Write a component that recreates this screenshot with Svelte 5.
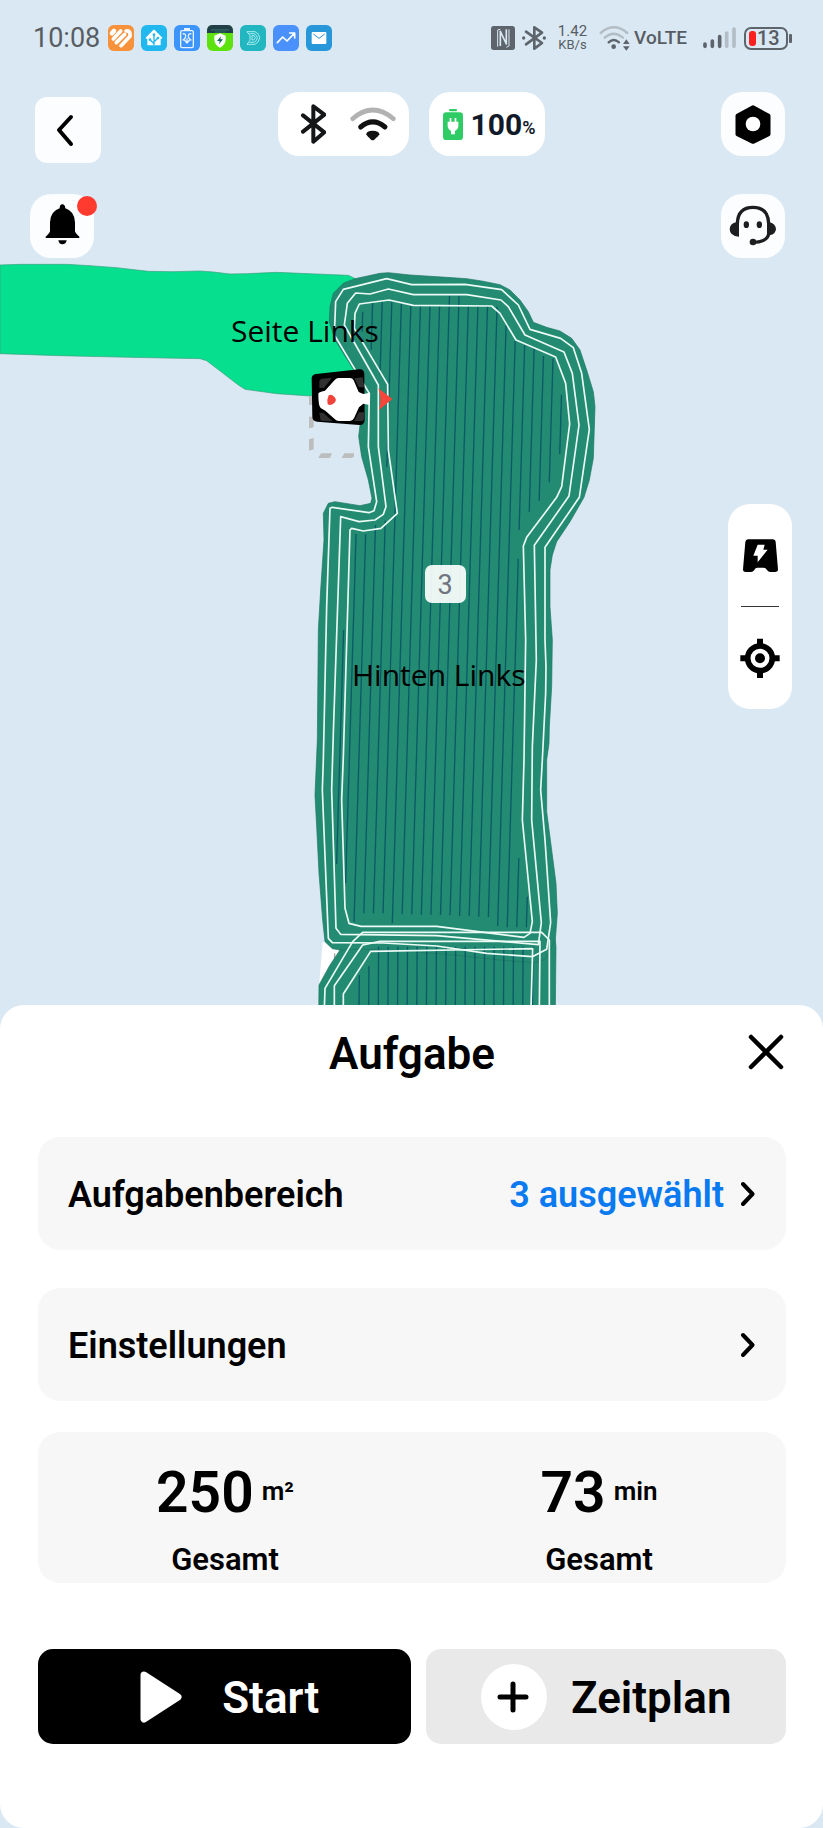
<script>
  const PITCH = 28.75;
  const LEAN = 0.03;

  // Mowing lanes of the upper zone: lane index, start and end along the lane.
  const lanes = [
    [-1, 1140, 1842],
    [0, 185, 245], [0, 852, 1900],
    [1, 156, 300], [1, 853, 2015],
    [2, 155, 372], [2, 826, 1990],
    [3, 155, 652], [3, 812, 1990],
    [4, 158, 1990], [5, 168, 2020],
    [6, 168, 1993], [7, 168, 1993], [8, 168, 1994],
    [9, 138, 1994], [10, 138, 1995], [11, 168, 1996],
    [12, 168, 1998], [13, 168, 1999], [14, 170, 2000],
    [15, 225, 2001], [16, 272, 2028],
    [17, 285, 840], [17, 926, 2032],
    [18, 290, 785], [18, 1825, 2032],
    [19, 318, 752], [19, 1940, 2032],
    [20, 326, 697], [21, 434, 612]
  ];
  const laneX = (k, y) => 189 + PITCH * k - LEAN * (y - 160);

  const lowerLanes = Array.from({ length: 19 }, (_, i) => ({
    x: 178 + i * 28.9,
    y: i === 0 ? 2175 : i === 1 ? 2148 : 2090
  }));

  const stats = [
    { value: '250', unit: 'm²', label: 'Gesamt' },
    { value: '73', unit: 'min', label: 'Gesamt' }
  ];
</script>

<div class="screen">
  <section class="stage">
    <svg class="map" viewBox="0 0 823 1005" preserveAspectRatio="xMidYMin slice" role="img" aria-label="Karte">
      <g transform="translate(0 250) scale(.33333)">
        <path d="M0 45L60 43L200 43L270 47L350 53L445 64L520 65L600 63L640 66L690 72L740 71L830 67L950 72L1045 76L1070 88L1100 380L1060 440L930 438L830 431L735 418L715 405L620 332L600 326L390 322L180 317L0 311Z" fill="#05df8e" stroke="#3f9f80" stroke-width="2" />
      </g>
      <g transform="translate(300 250) scale(.33333)" fill="none">
        <path d="M68 2075L52 2275H140V2090Z" fill="#fff" />
        <path d="M104 2110V2136" stroke="#a8aaa9" stroke-width="4" />
        <path fill="#238b72" stroke="#1c765f" stroke-width="2" d="M165 86L240 70L265 68L330 75L440 82L500 86L545 93L600 104L630 120L660 150L685 185L700 217L740 232L780 243L815 265L840 300L860 360L880 425L885 470L880 625L868 690L852 742L810 815L770 875L757 915L750 960L750 1070L757 1170L755 1310L748 1430L747 1480L740 1530L740 1685L755 1800L768 1900L772 1990L766 2070L768 2090L766 2275H56L57 2205L90 2145L120 2100L97 2096L75 2075L68 2010L57 1870L50 1730L45 1635L52 1470L55 1140L62 1020L72 870L70 790L85 760L105 755L180 767L212 760L216 745L205 690L185 620L176 560L180 525L185 370L160 358L105 270L88 215L90 170L100 130L130 100Z" />
        <path stroke="#1b765f" stroke-width="2" d="M120 2100L190 2097L410 2110L600 2130L700 2138L735 2128L766 2070" />
        <g stroke="#0a5a68" stroke-width="4">
          {#each lanes as [k, y1, y2]}
            <line x1={laneX(k, y1)} {y1} x2={laneX(k, y2)} {y2} />
          {/each}
          {#each lowerLanes as lane}
            <line x1={lane.x} y1={lane.y} x2={lane.x - 1} y2="2275" />
          {/each}
        </g>
        <g stroke="#ecfbf5" stroke-width="5" stroke-linejoin="round">
          <path d="M260 86L335 104L495 103L605 119L655 165L690 238L782 265L820 293L845 370L868 538L838 742L735 892L735 1170L738 1250L737 1330L727 1530L722 1620L735 1770L752 2018L740 2098L697 2120L560 2110L410 2088L250 2079L97 2078L85 2065L67 1620L70 1530L80 1070L90 775L97 772L207 788L222 782L230 755L205 590L208 430L103 255L107 155L130 118Z" />
          <path d="M265 117L340 134L500 134L603 150L625 170L675 255L792 306L817 370L837 525L807 738L703 886L709 1230L697 1490L695 1710L724 2018L715 2084L410 2057L122 2053L108 2035L95 1620L100 1450L122 800L177 815L225 810L250 793L258 770L235 590L235 405L133 225L142 160L167 129L210 132Z" />
          <path d="M267 150L340 166L575 168L600 190L648 270L767 321L797 400L809 522L785 710L770 742L680 862L670 888L677 1170L672 1530L667 1710L697 2015L690 2050L672 2062L410 2029L183 2029L147 2020L135 1975L125 1650L130 1520L150 840L155 835L190 843L243 835L292 790L265 600L263 403L163 235L165 190L178 162Z" />
          <path d="M73 2275L75 2215L158 2075L188 2047H725L748 2070V2275" />
          <path d="M103 2275V2207L188 2085L240 2074H720L718 2275" />
          <path d="M130 2275V2232L212 2104L698 2096L693 2275" />
        </g>
      </g>
      <g class="zone">
        <text x="231" y="342">Seite Links</text>
        <text x="352" y="686">Hinten Links</text>
      </g>
      <rect x="425" y="565" width="41" height="38" rx="7" fill="#fff" fill-opacity=".91" />
      <text class="count" x="445" y="594" text-anchor="middle">3</text>
      <g transform="translate(300 250) scale(.33333)">
        <path fill="#bcbdbd" d="M27 440L41 436V465H27ZM27 500H41V532L27 535ZM27 568L41 564V598L27 602ZM63 610H96L90 624H55ZM133 610H162V620L154 624H125Z" />
        <path d="M48 372L178 358Q192 357 193 372L194 510Q193 526 178 525L52 515Q37 513 37 500L35 385Q35 374 48 372Z" />
        <path fill="#303030" d="M64 386L96 383L72 414H58V392ZM163 385L188 382L193 412H176ZM58 488H70L98 514L62 512ZM176 487H193V508L188 513H163Z" />
        <path fill="#fff" d="M55 432Q54 426 75 422L104 390Q109 384 116 384H150Q157 384 161 391L176 426L190 432L209 428V465L190 461L177 472L162 505Q158 513 150 513H117Q109 513 104 507L76 482L62 474Q55 468 55 432Z" />
        <path fill="#f0443a" d="M86 436Q96 430 104 442Q112 450 102 460Q92 468 83 463Q80 448 86 436Z" />
        <path fill="#f8453a" d="M235 415L277 447L237 480Q247 447 235 415Z" />
      </g>
    </svg>

    <div class="status">
      <span class="time">10:08</span>
      <div class="apps">
        <svg viewBox="0 0 78 78">
          <rect width="78" height="78" rx="17" fill="#f8923a" />
          <g stroke="#fff" stroke-width="11" stroke-linecap="round" fill="none">
            <path d="M12 25L18 18" stroke-width="14" /><path d="M16 42L38 18" /><path d="M25 53L50 28" /><path d="M39 62L66 34V25Q64 16 54 18" />
          </g>
        </svg>
        <svg viewBox="0 0 78 78">
          <rect width="78" height="78" rx="17" fill="#20b8ee" />
          <path d="M39 16L62 39H57V59H21V39H16Z" fill="#fff" stroke="#fff" stroke-width="4" stroke-linejoin="round" />
          <path d="M39 30V61M39 56L27 44M39 51L50 40" stroke="#20b8ee" stroke-width="4" fill="none" />
          <g fill="#20b8ee"><circle cx="39" cy="29" r="4" /><circle cx="27" cy="44" r="4" /><circle cx="51" cy="39" r="4" /></g>
        </svg>
        <svg viewBox="0 0 78 78">
          <rect width="78" height="78" rx="17" fill="#3d94fa" />
          <g stroke="#e7f3ff" stroke-width="4" fill="none">
            <rect x="20" y="17" width="38" height="51" rx="4" /><path d="M30 12H48" stroke-width="6" /><path d="M26 27Q35 24 35 34Q34 42 26 46M52 27Q43 24 43 34Q44 42 52 46M31 45L39 54L47 45M39 40V52" />
          </g>
        </svg>
        <svg viewBox="0 0 78 78">
          <rect width="78" height="78" rx="17" fill="#5de20f" />
          <path d="M0 24V17Q0 0 17 0H61Q78 0 78 17V24Z" fill="#213f48" />
          <path d="M12 12H66V17H12ZM24 19H56V23H24Z" fill="#2e5d5b" />
          <path d="M39 25L56 32V45Q55 60 39 68Q23 60 22 45V32Z" fill="#fff" />
          <path d="M42 34L30 48H38L36 58L48 43H40Z" fill="#17655a" />
        </svg>
        <svg viewBox="0 0 78 78">
          <rect width="78" height="78" rx="17" fill="#21b6c0" />
          <path d="M21 20H45Q58 26 59 38Q58 52 45 58H21L30 46V32ZM28 26H42Q51 30 52 38Q51 48 42 52H29M36 32H42L46 38L41 45H36Z" fill="none" stroke="#a9edf0" stroke-width="3" stroke-linejoin="round" />
        </svg>
        <svg viewBox="0 0 78 78">
          <rect width="78" height="78" rx="17" fill="#4a91fb" />
          <path d="M13 53L29 36L42 48L63 26M50 24H65V39" fill="none" stroke="#fff" stroke-width="5" stroke-linejoin="round" stroke-linecap="round" />
        </svg>
        <svg viewBox="0 0 78 78">
          <rect width="78" height="78" rx="17" fill="#2897da" />
          <rect x="17" y="21" width="44" height="36" rx="3" fill="#fff" />
          <path d="M22 27L39 40L56 27" fill="none" stroke="#2590d0" stroke-width="3" />
        </svg>
      </div>
      <div class="signals">
        <svg width="24" height="24" viewBox="0 0 72 72">
          <rect width="72" height="72" rx="8" fill="#5d646b" />
          <path d="M28 60V16L46 54V10" fill="none" stroke="#dae8f3" stroke-width="5" stroke-linejoin="round" /><path d="M20 62V12L28 10M54 10V60L46 64" fill="none" stroke="#dae8f3" stroke-width="3" />
        </svg>
        <svg class="bt" width="24" height="26" viewBox="0 0 72 78">
          <path d="M12 20L60 54L37 71V7L60 23L12 58" fill="none" stroke="#5d646b" stroke-width="8" stroke-linejoin="round" stroke-linecap="round" />
          <g fill="#5d646b"><circle cx="5" cy="39" r="5" /><circle cx="67" cy="39" r="5" /></g>
        </svg>
        <span class="rate"><span>1.42</span><span class="kb">KB/s</span></span>
        <svg class="wifi" width="31" height="26" viewBox="0 0 93 78">
          <g fill="none" stroke-width="7" stroke-linecap="round">
            <path d="M5 24Q44 -10 85 24" stroke="#b3bdc5" /><path d="M17 38Q44 14 72 38" stroke="#b3bdc5" /><path d="M29 52Q44 38 60 52" stroke="#5d646b" />
          </g>
          <circle cx="44" cy="65" r="7" fill="#5d646b" />
          <path d="M82 43L92 57H72ZM82 77L92 64H72Z" fill="#5d646b" />
        </svg>
        <span class="volte">VoLTE</span>
        <svg class="bars" width="33" height="22" viewBox="0 0 99 66">
          <g stroke-width="11" stroke-linecap="round">
            <path d="M6 51V58M28 42V58M50 29V58" stroke="#5d646b" /><path d="M71 18V58M93 6V58" stroke="#b3bdc5" />
          </g>
        </svg>
        <span class="phone-battery">13</span>
      </div>
    </div>

    <header class="bar">
      <button class="back" aria-label="Zurück">
        <svg width="66" height="66" viewBox="0 0 66 66"><path d="M36 20L24 33L36 47" fill="none" stroke="#000" stroke-width="4" stroke-linecap="round" stroke-linejoin="round" /></svg>
      </button>
      <div class="pills">
        <div class="pill link">
          <svg width="26" height="40" viewBox="0 0 78 120">
            <path d="M9 34L73 85L40 113V7L73 32L9 83" fill="none" stroke="#151618" stroke-width="12" stroke-linejoin="round" stroke-linecap="round" />
          </svg>
          <svg width="46" height="34" viewBox="0 0 138 102">
            <path d="M8 35Q68 -17 130 35" fill="none" stroke="#b2b2b2" stroke-width="14" stroke-linecap="round" />
            <path d="M32 60Q68 29 105 60" fill="none" stroke="#111" stroke-width="15" stroke-linecap="round" />
            <path d="M49 82Q49 71 68 71Q87 71 88 82Q86 87 73 98Q68 101 63 98Q51 87 49 82Z" fill="#111" />
          </svg>
        </div>
        <div class="pill charge">
          <svg width="20" height="31" viewBox="0 0 60 93">
            <rect x="18" width="24" height="7" rx="3" fill="#2fcc65" /><rect y="10" width="60" height="83" rx="10" fill="#2fcc65" />
            <path d="M20 27H25V38H35V27H40V38H46V53Q45 61 36 66V76H24V66Q15 61 14 53V38H20Z" fill="#fff" />
          </svg>
          <span class="level">100</span><span class="percent">%</span>
        </div>
      </div>
      <button class="tile end" aria-label="Einstellungen öffnen">
        <svg width="64" height="64" viewBox="0 0 192 192"><path d="M96 45L143 71V127L96 150L49 127V71Z" stroke="#000" stroke-width="11" stroke-linejoin="round" /><circle cx="96" cy="96" r="22" fill="#fff" /></svg>
      </button>
    </header>

    <div class="second">
      <button class="tile" aria-label="Meldungen">
        <svg width="64" height="64" viewBox="0 0 192 192"><path d="M89 43Q89 31 97 31Q105 31 106 43Q134 52 135 85V112Q136 118 148 128V132H47V128Q59 118 60 112V85Q61 52 89 43Z" /><path d="M85 139H110Q108 151 97 151Q87 151 85 139Z" /></svg>
        <span class="alert"></span>
      </button>
      <button class="tile" aria-label="Hilfe">
        <svg width="64" height="64" viewBox="0 0 192 192">
          <path d="M49 125V88Q51 40 96 40Q141 40 143 88V120Q139 144 96 145" fill="none" stroke="#1c1e20" stroke-width="10" />
          <path d="M54 128Q26 126 26 105Q27 88 46 85H54ZM138 85H146Q164 90 165 105Q164 121 146 124H138Z" fill="#1c1e20" />
          <circle cx="96" cy="144" r="10" fill="#1c1e20" /><ellipse cx="76" cy="92" rx="8" ry="10" fill="#1c1e20" /><ellipse cx="115" cy="92" rx="8" ry="10" fill="#1c1e20" />
        </svg>
      </button>
    </div>

    <div class="tools">
      <button aria-label="Zur Station">
        <svg width="64" height="102" viewBox="0 0 192 306">
          <path d="M60 106H134Q142 106 143 114L150 196Q150 204 141 204H127Q121 204 117 198Q113 191 107 191H88Q82 191 79 198Q75 204 69 204H53Q45 204 45 196L52 114Q53 106 60 106Z" />
          <path d="M89 122H110L106 137H119L89 175V155H76Z" fill="#fff" />
        </svg>
      </button>
      <hr />
      <button aria-label="Zentrieren">
        <svg width="64" height="102" viewBox="0 0 192 306">
          <circle cx="96" cy="154" r="37" fill="none" stroke="#000" stroke-width="17" /><circle cx="96" cy="154" r="15" />
          <path d="M87 95H105V117H87ZM87 191H105V213H87ZM37 145H58V163H37ZM134 145H155V163H134Z" />
        </svg>
      </button>
    </div>
  </section>

  <section class="sheet">
    <div class="sheet-head">
      <h1>Aufgabe</h1>
      <button class="close" aria-label="Schließen">
        <svg width="36" height="36" viewBox="0 0 36 36"><path d="M3 3L33 33M33 3L3 33" stroke="#000" stroke-width="4.500" stroke-linecap="round" /></svg>
      </button>
    </div>

    <div class="rows">
      <button class="row">
        <span>Aufgabenbereich</span>
        <span class="chosen">3 ausgewählt</span>
        <svg width="14" height="26" viewBox="0 0 14 26"><path d="M2 3L11.500 13L2 23" fill="none" stroke="#000" stroke-width="4" stroke-linecap="round" stroke-linejoin="round" /></svg>
      </button>
      <button class="row">
        <span>Einstellungen</span>
        <svg width="14" height="26" viewBox="0 0 14 26"><path d="M2 3L11.500 13L2 23" fill="none" stroke="#000" stroke-width="4" stroke-linecap="round" stroke-linejoin="round" /></svg>
      </button>
    </div>

    <div class="stats">
      {#each stats as s}
        <div class="stat">
          <div class="figure"><span class="value">{s.value}</span><span class="unit">{s.unit}</span></div>
          <div class="label">{s.label}</div>
        </div>
      {/each}
    </div>

    <div class="actions">
      <button class="start">
        <svg width="52" height="52" viewBox="0 0 52 52"><path d="M14 4L48 26L14 48Z" fill="#fff" stroke="#fff" stroke-width="7" stroke-linejoin="round" /></svg>
        <span>Start</span>
      </button>
      <button class="plan">
        <svg width="66" height="66" viewBox="0 0 66 66"><circle cx="33" cy="33" r="33" fill="#fff" /><path d="M32 20V46M19 33H45" stroke="#000" stroke-width="5" stroke-linecap="round" /></svg>
        <span>Zeitplan</span>
      </button>
    </div>
  </section>
</div>

<style>
  :global(body) { margin: 0; background: #dae8f3; }
  .screen {
    display: flex;
    flex-direction: column;
    min-height: 100vh;
    background: #dae8f3;
    color: #000;
    font-family: Roboto, "Liberation Sans", sans-serif;
  }
  button {
    border: 0;
    padding: 0;
    background: none;
    font: inherit;
    color: inherit;
    cursor: pointer;
  }
  svg { display: block; flex: none; }

  .stage { position: relative; flex: 1; overflow: hidden; padding-bottom: 296px; }
  .stage > * { position: relative; }
  .stage > .map { position: absolute; inset: 0; width: 100%; height: 100%; }
  .zone { font: 30px "Open Sans", "Noto Sans", sans-serif; fill: #000; }
  .count { font: 27px Roboto, sans-serif; fill: #6f7480; }

  .status {
    display: flex;
    align-items: center;
    height: 76px;
    padding: 0 31px 0 33px;
    color: #575d63;
  }
  .time { font-size: 27px; line-height: 32px; }
  .apps { display: flex; gap: 7px; margin-left: 8px; }
  .apps svg { width: 26px; height: 26px; }
  .signals { display: flex; align-items: center; margin-left: auto; }
  .bt { margin-left: 7px; }
  .rate {
    display: flex;
    flex-direction: column;
    align-items: center;
    margin-left: 12px;
    font-size: 15px;
    line-height: 13px;
  }
  .kb { font-size: 13px; }
  .wifi { margin-left: 12px; }
  .volte { margin-left: 4px; font-size: 19px; line-height: 24px; font-weight: 500; }
  .bars { margin-left: 16px; }
  .phone-battery {
    position: relative;
    box-sizing: border-box;
    width: 44px;
    height: 23px;
    margin: 0 4px 0 8px;
    padding-left: 11px;
    border: 2px solid #5d646b;
    border-radius: 7px;
    font-size: 20px;
    line-height: 19px;
    font-weight: 500;
  }
  .phone-battery::before {
    content: "";
    position: absolute;
    left: 3px;
    top: 2px;
    width: 7px;
    height: 15px;
    border-radius: 3px;
    background: #fb2020;
  }
  .phone-battery::after {
    content: "";
    position: absolute;
    right: -6px;
    top: 5px;
    width: 3px;
    height: 9px;
    border-radius: 1px;
    background: #5d646b;
  }

  .bar {
    display: grid;
    grid-template-columns: 1fr auto 1fr;
    align-items: start;
    margin-top: 16px;
    padding: 0 38px 0 35px;
  }
  .back { justify-self: start; margin-top: 5px; border-radius: 12px; background: #fcfdff; }
  .pills { display: flex; gap: 20px; margin-left: 3px; }
  .pill { display: flex; align-items: center; height: 64px; border-radius: 21px; background: #fff; }
  .link { gap: 24px; padding: 0 13px 0 22px; }
  .charge { padding: 0 10px 0 14px; color: #121a2a; }
  .level { margin-left: 8px; padding-top: 2px; font-size: 30px; line-height: 36px; font-weight: 700; }
  .percent { margin-top: 8px; font-size: 18px; line-height: 20px; font-weight: 600; }
  .tile { position: relative; border-radius: 21px; background: #fcfdff; }
  .end { justify-self: end; }
  .alert {
    position: absolute;
    right: -3px;
    top: 2px;
    width: 20px;
    height: 20px;
    border-radius: 50%;
    background: #ff3b30;
  }
  .second { display: flex; justify-content: space-between; margin-top: 31px; padding: 0 38px 0 30px; }
  .tools {
    display: flex;
    flex-direction: column;
    width: 64px;
    margin: 246px 31px 0 auto;
    border-radius: 22px;
    background: #fff;
  }
  .tools hr { width: 38px; height: 1px; margin: 0 auto; border: 0; background: #333; }

  .sheet { padding: 23px 37px 84px 38px; border-radius: 24px; background: #fff; }
  .sheet-head {
    display: grid;
    grid-template-columns: 1fr auto 1fr;
    align-items: center;
  }
  h1 { grid-column: 2; margin: 0; font-size: 44px; line-height: 52px; font-weight: 600; }
  .close { justify-self: end; margin: 0 2px 4px 0; }
  .rows { display: grid; gap: 38px; margin-top: 57px; }
  .row {
    display: flex;
    align-items: center;
    height: 113px;
    padding: 0 31px 0 30px;
    border-radius: 22px;
    background: #f7f7f7;
    font-size: 36px;
    font-weight: 600;
  }
  .row svg { margin-left: 17px; }
  .row span { padding-top: 2px; }
  .row span:first-child { margin-right: auto; }
  .chosen { color: #0a7af0; }
  .stats {
    display: grid;
    grid-template-columns: 1fr 1fr;
    margin-top: 31px;
    padding: 29px 0 5px;
    border-radius: 22px;
    background: #f7f7f7;
    text-align: center;
    font-weight: 600;
  }
  .figure { display: flex; justify-content: center; align-items: center; gap: 8px; }
  .value { font-size: 57px; line-height: 64px; }
  .unit { padding-bottom: 4px; font-size: 26px; line-height: 30px; }
  .label { margin-top: 17px; font-size: 31px; line-height: 36px; }
  .actions { display: grid; grid-template-columns: 374fr 360fr; gap: 15px; margin-top: 66px; }
  .actions button {
    display: flex;
    align-items: center;
    justify-content: center;
    height: 95px;
    border-radius: 15px;
    font-size: 44px;
    font-weight: 600;
  }
  .actions span { padding-top: 3px; }
  .actions .start { gap: 40px; background: #000; color: #fff; }
  .actions .plan { gap: 24px; background: #e9e9e9; }
</style>
